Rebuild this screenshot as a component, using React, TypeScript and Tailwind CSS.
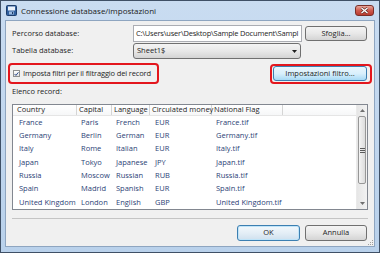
const rows = [
  ['France', 'Paris', 'French', 'EUR', 'France.tif'],
  ['Germany', 'Berlin', 'German', 'EUR', 'Germany.tif'],
  ['Italy', 'Rome', 'Italian', 'EUR', 'Italy.tif'],
  ['Japan', 'Tokyo', 'Japanese', 'JPY', 'Japan.tif'],
  ['Russia', 'Moscow', 'Russian', 'RUB', 'Russia.tif'],
  ['Spain', 'Madrid', 'Spanish', 'EUR', 'Spain.tif'],
  ['United Kingdom', 'London', 'English', 'GBP', 'United Kingdom.tif'],
];

// column widths in px (header dividers sit on the right edge)
const cols = ['w-[64px] pl-[4px]', 'w-[35px] pl-[2px]', 'w-[38px] pl-[2px]', 'w-[62px] pl-[2px]', 'w-[71px] pl-[2px]'];
const cellCols = ['w-[64px] pl-[6px]', 'w-[35px] pl-[4px]', 'w-[38px] pl-[4px]', 'w-[62px] pl-[5px]', 'w-[71px] pl-[4px]'];

const btn =
  'flex items-center justify-center rounded-[3px] border border-[#707070] bg-gradient-to-b from-[#f4f4f4] via-[#e8e8e8] to-[#d4d4d4] text-[#1e1e1e]';

const App = () => {
  return (
    <div className="w-[380px] h-[253px] flex flex-col overflow-hidden border border-[#3f5066] bg-gradient-to-b from-[#c9dcf1] to-[#b9d1eb] px-[4px] pb-[5px] font-['Open_Sans',sans-serif] text-[7.5px] leading-none whitespace-nowrap">
      {/* Title bar */}
      <div className="h-[19px] flex items-center shrink-0">
        <svg width="11" height="11" viewBox="0 0 11 11" className="ml-[1px]">
          <rect x="0.5" y="0.5" width="10" height="10" rx="1" fill="#2f5f9e" stroke="#1c3c6a" />
          <rect x="2" y="1.5" width="7" height="4" fill="#e9f1fb" />
          <rect x="3" y="6.5" width="5" height="3" fill="#9bb9de" />
          <rect x="6" y="7" width="1.2" height="2" fill="#1c3c6a" />
        </svg>
        <span className="ml-[4px] text-[8px] text-[#1a1a1a]">Connessione database/impostazioni</span>
        <div className="ml-auto mr-[1px] w-[19px] h-[11px] rounded-[3px] border border-[#7a2e28] bg-gradient-to-b from-[#e7a79c] via-[#cf5a4e] to-[#b8392e] flex items-center justify-center">
          <svg width="9" height="7" viewBox="0 0 9 7">
            <path d="M1.5 1 L7.5 6 M7.5 1 L1.5 6" stroke="#5a2a26" strokeWidth="2.6" />
            <path d="M1.5 1 L7.5 6 M7.5 1 L1.5 6" stroke="#ffffff" strokeWidth="1.4" />
          </svg>
        </div>
      </div>

      {/* Client area */}
      <div className="relative flex-1 flex flex-col bg-[#f0f0f0] border border-[#8ea5c0] text-[#1e1e1e]">
        {/* Percorso database */}
        <div className="mt-[4px] h-[17px] flex items-center">
          <span className="w-[127px] pl-[6px]">Percorso database:</span>
          <div className="w-[169px] h-[17px] flex items-center bg-white border border-[#abadb3] pl-[2px]">
            <span className="tracking-[-0.2px]">C:\Users\user\Desktop\Sample Document\Sampl</span>
          </div>
          <div className={`${btn} ml-[3px] w-[62px] h-[15px]`}>Sfoglia...</div>
        </div>

        {/* Tabella database */}
        <div className="mt-[1px] h-[16px] flex items-center">
          <span className="w-[127px] pl-[6px]">Tabella database:</span>
          <div className={`${btn} !justify-between w-[168px] h-[16px] pl-[3px] pr-[3px]`}>
            <span>Sheet1$</span>
            <svg width="5" height="3" viewBox="0 0 5 3">
              <path d="M0 0 H5 L2.5 3 Z" fill="#1e1e1e" />
            </svg>
          </div>
        </div>

        {/* Filter row */}
        <div className="mt-[4px] h-[21px] flex items-center">
          <div className="ml-[2px] w-[151px] h-[21px] rounded-[4px] border-2 border-[#e3161d] flex items-center pl-[3px]">
            <div className="w-[7px] h-[7px] shrink-0 border border-[#8e8f8f] bg-gradient-to-b from-[#ffffff] to-[#e2e2e2] flex items-center justify-center">
              <svg width="6" height="6" viewBox="0 0 6 6">
                <path d="M0.7 3 L2.3 4.7 L5.3 1" stroke="#2c4a8a" strokeWidth="1.2" fill="none" />
              </svg>
            </div>
            <span className="ml-[3px] tracking-[-0.15px]">Imposta filtri per il filtraggio dei record</span>
          </div>
          <div className="ml-auto mr-[2px] w-[102px] h-[20px] rounded-[4px] border-2 border-[#e3161d] flex items-center pl-[1px]">
            <div className="w-[94px] h-[15px] flex items-center justify-center rounded-[3px] border border-[#3c7fb1] bg-gradient-to-b from-[#eaf6fd] via-[#d9f0fc] to-[#a7d9f5]">
              Impostazioni filtro...
            </div>
          </div>
        </div>

        {/* Elenco record */}
        <div className="mt-[2px] h-[12px] flex items-center pl-[6px]">Elenco record:</div>

        {/* List */}
        <div className="mt-[6px] ml-[6px] w-[356px] h-[106px] border border-[#828790] bg-white flex">
          <div className="flex-1 flex flex-col">
            <div className="h-[11px] flex items-center border-b border-[#e5e5e5] bg-gradient-to-b from-white to-[#f6f7f8]">
              {['Country', 'Capital', 'Language', 'Circulated money', 'National Flag'].map((h, i) => (
                <div key={h} className={`${cols[i]} h-full flex items-center border-r border-[#d5d5d5]`}>
                  {h}
                </div>
              ))}
              <div className="flex-1" />
            </div>
            {rows.map((r) => (
              <div key={r[0]} className="h-[13.3px] flex items-center text-[#2b4276]">
                {r.map((c, i) => (
                  <div key={i} className={cellCols[i]}>
                    {c}
                  </div>
                ))}
              </div>
            ))}
          </div>
          {/* Scrollbar */}
          <div className="w-[11px] flex flex-col bg-gradient-to-r from-[#e6e6e6] to-[#f2f2f2] border-l border-[#eaeaea]">
            <div className="h-[11px] flex items-center justify-center">
              <svg width="5" height="3" viewBox="0 0 5 3">
                <path d="M0 3 H5 L2.5 0 Z" fill="#6f6f6f" />
              </svg>
            </div>
            <div className="mx-[1px] h-[68px] rounded-[2px] border border-[#979797] bg-gradient-to-r from-[#f4f4f4] to-[#dcdcdc] flex items-center justify-center">
              <div className="flex flex-col gap-[1px]">
                <div className="w-[5px] h-px bg-[#5a5a5a]" />
                <div className="w-[5px] h-px bg-[#5a5a5a]" />
                <div className="w-[5px] h-px bg-[#5a5a5a]" />
              </div>
            </div>
            <div className="flex-1" />
            <div className="h-[11px] flex items-center justify-center">
              <svg width="5" height="3" viewBox="0 0 5 3">
                <path d="M0 0 H5 L2.5 3 Z" fill="#6f6f6f" />
              </svg>
            </div>
          </div>
        </div>

        {/* Separator */}
        <div className="mt-[8px] ml-[6px] w-[356px] h-px bg-[#c4c4c4]" />

        {/* Buttons */}
        <div className="mt-[6px] flex justify-end pr-[7px] gap-[5px]">
          <div className="w-[63px] h-[16px] flex items-center justify-center rounded-[3px] border border-[#3c7fb1] bg-gradient-to-b from-[#f2f8fc] via-[#e4eef6] to-[#cfe0ee] shadow-[inset_0_0_0_1px_#bfe4f9]">
            OK
          </div>
          <div className={`${btn} w-[62px] h-[16px]`}>Annulla</div>
        </div>

        {/* Resize grip */}
        <div className="absolute right-[1px] bottom-[1px] grid grid-cols-3 gap-[1px]">
          <div />
          <div />
          <div className="w-px h-px bg-[#a0a0a0]" />
          <div />
          <div className="w-px h-px bg-[#a0a0a0]" />
          <div className="w-px h-px bg-[#a0a0a0]" />
          <div className="w-px h-px bg-[#a0a0a0]" />
          <div className="w-px h-px bg-[#a0a0a0]" />
          <div className="w-px h-px bg-[#a0a0a0]" />
        </div>
      </div>
    </div>
  );
};

export default App;
